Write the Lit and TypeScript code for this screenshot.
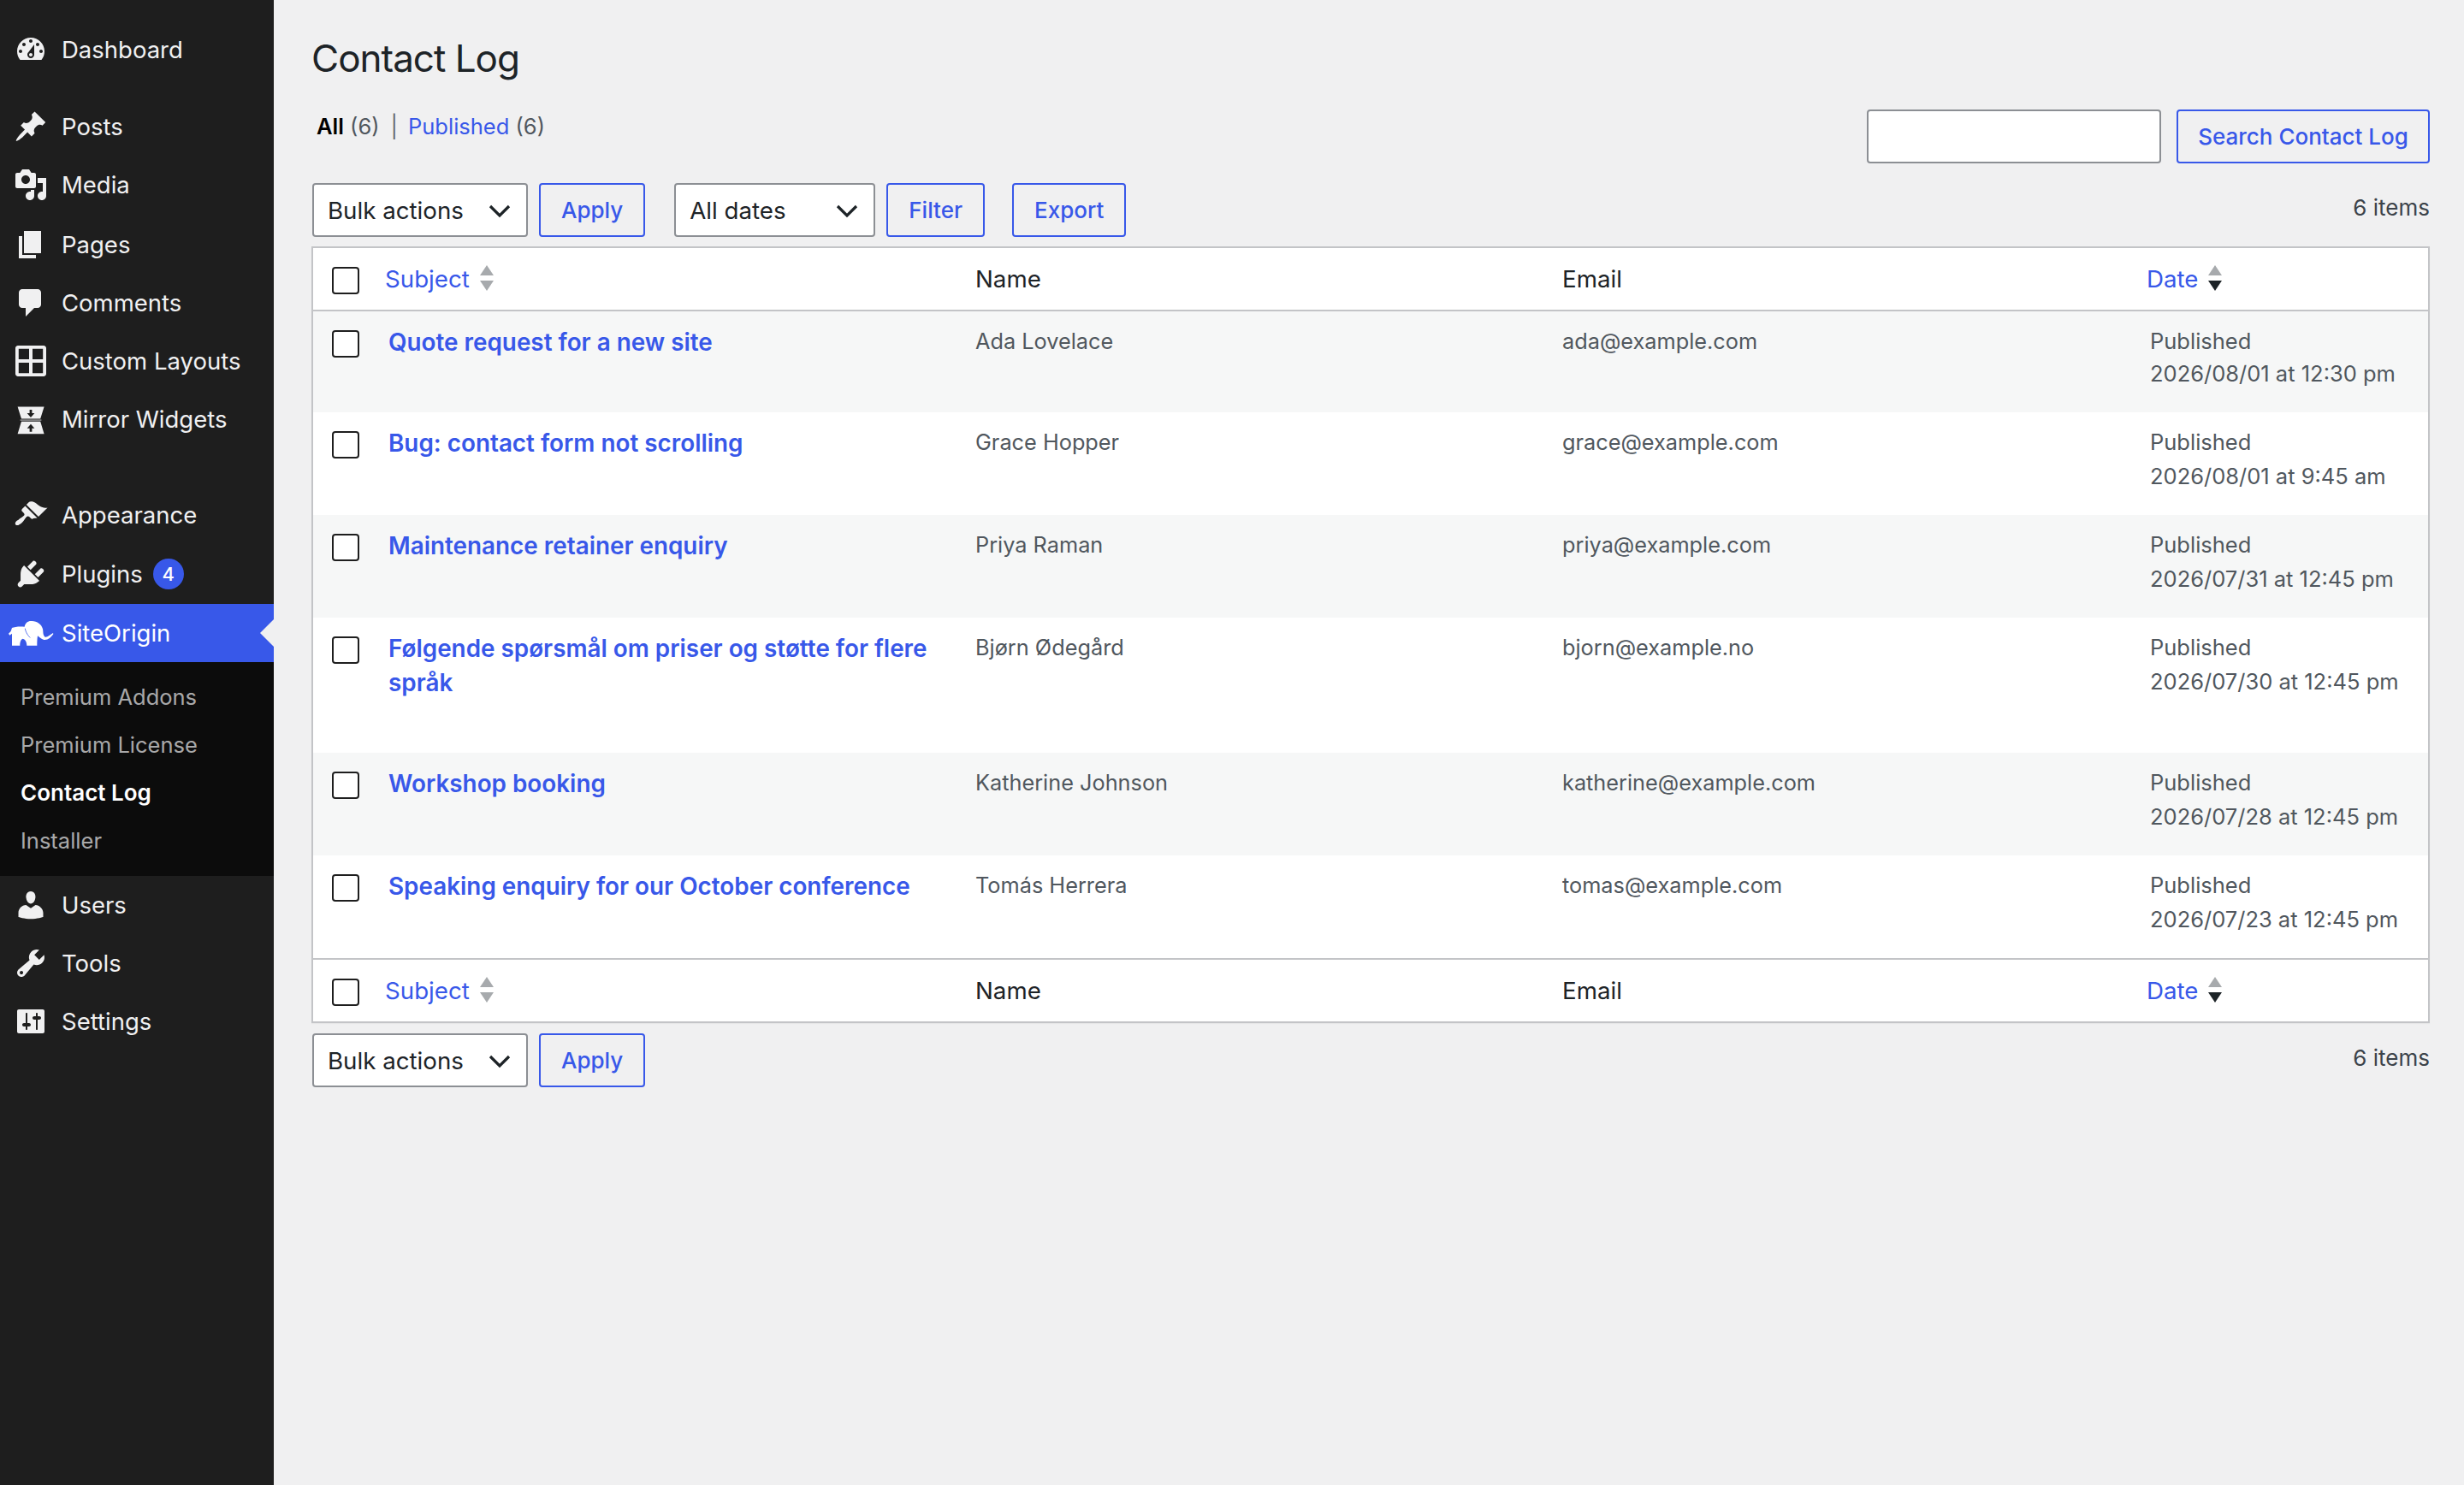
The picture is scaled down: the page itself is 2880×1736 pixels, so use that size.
import { LitElement, html, css, svg } from "lit";
import { customElement } from "lit/decorators.js";

// dashicons, 20x20 box
const icons: Record<string, unknown> = {
  dashboard: svg`<path fill-rule="evenodd" d="M3.76 16h12.48c1.1-1.37 1.76-3.11 1.76-5 0-4.42-3.58-8-8-8s-8 3.58-8 8c0 1.89.66 3.63 1.76 5zM10 4c.55 0 1 .45 1 1s-.45 1-1 1-1-.45-1-1 .45-1 1-1zM6 6c.55 0 1 .45 1 1s-.45 1-1 1-1-.45-1-1 .45-1 1-1zm8 0c.55 0 1 .45 1 1s-.45 1-1 1-1-.45-1-1 .45-1 1-1zm-5.37 5.55L12 7v6c0 1.1-.9 2-2 2s-2-.9-2-2c0-.57.24-1.08.63-1.45zM4 10c.55 0 1 .45 1 1s-.45 1-1 1-1-.45-1-1 .45-1 1-1zm12 0c.55 0 1 .45 1 1s-.45 1-1 1-1-.45-1-1 .45-1 1-1zm-5 3c0-.55-.45-1-1-1s-1 .45-1 1 .45 1 1 1 1-.45 1-1z"/>`,
  post: svg`<path d="M10.44 3.02l1.82-1.82 6.36 6.35-1.83 1.82c-1.05-.68-2.48-.57-3.41.36l-.75.75c-.92.93-1.04 2.35-.35 3.41l-1.83 1.82-2.41-2.41-2.8 2.79c-.42.42-3.38 2.71-3.8 2.29s1.86-3.39 2.28-3.81l2.79-2.79L4.1 9.36l1.83-1.82c1.05.69 2.48.57 3.4-.36l.75-.75c.93-.92 1.05-2.35.36-3.41z"/>`,
  media: svg`<path fill-rule="evenodd" d="M13 11V4c0-.55-.45-1-1-1h-1.67L9 1H5L3.67 3H2c-.55 0-1 .45-1 1v7c0 .55.45 1 1 1h10c.55 0 1-.45 1-1zM7 4.5c1.38 0 2.5 1.12 2.5 2.5S8.38 9.5 7 9.5 4.5 8.38 4.5 7 5.62 4.5 7 4.5zM14 6h5v10.5c0 1.38-1.12 2.5-2.5 2.5S14 17.88 14 16.5s1.12-2.5 2.5-2.5c.17 0 .34.02.5.05V9h-3V6zm-4 8.05V13h2v3.5c0 1.38-1.12 2.5-2.5 2.5S7 17.88 7 16.5 8.12 14 9.5 14c.17 0 .34.02.5.05z"/>`,
  page: svg`<path d="M6 15V2h10v13H6zm-1 1h8v2H3V5h2v11z"/>`,
  comments: svg`<path d="M5 2h9c1.1 0 2 .9 2 2v7c0 1.1-.9 2-2 2h-2l-5 5v-5H5c-1.1 0-2-.9-2-2V4c0-1.1.9-2 2-2z"/>`,
  layouts: svg`<path fill-rule="evenodd" d="M2.500 1h15c.83 0 1.500.67 1.500 1.500v15c0 .83-.67 1.500-1.500 1.500h-15c-.83 0-1.500-.67-1.500-1.500v-15C1 1.670 1.670 1 2.500 1zM2.900 2.900V9H9V2.900H2.900zm8.100 0V9h6.100V2.900H11zM2.900 11v6.100H9V11H2.900zm8.100 0v6.100h6.100V11H11z"/>`,
  mirror: svg`<path fill-rule="evenodd" d="M2.300 2.700h15.500l-2.200 7.100H4.500L2.300 2.700zM10 9l2.200-2.500h-1.500V4.500H9.300v2H7.800L10 9z"/>
    <path d="M3.800 10.200h12.400v.7H3.800z" opacity=".6"/>
    <path fill-rule="evenodd" d="M4.500 11.400h11.100l2.200 7.200H2.300l2.200-7.200zM10 12.900l-2.200 2.500h1.500v2h1.400v-2h1.500L10 12.900z"/>`,
  appearance: svg`<path d="M14.48 11.06L7.41 3.99l1.5-1.5c.5-.56 2.3-.47 3.51.32 1.21.8 1.43 1.28 2.91 2.1 1.18.64 2.45 1.26 4.45.85zm-.71.71L6.7 4.7 4.93 6.47c-.39.39-.39 1.02 0 1.41l1.06 1.06c.39.39.39 1.03 0 1.42-.6.6-1.43 1.11-2.21 1.69-.35.26-.7.53-1.01.84C1.43 13.23.4 14.98 1.2 15.78c.8.8 2.55-.23 3.89-1.57.31-.31.58-.66.84-1.01.58-.78 1.09-1.61 1.69-2.21.39-.39 1.03-.39 1.42 0l1.06 1.06c.39.39 1.02.39 1.41 0z"/>`,
  plugins: svg`<path d="M13.11 4.36L9.87 7.6 8 5.73l3.24-3.24c.35-.34 1.05-.2 1.56.32.52.51.66 1.21.31 1.55zm-8 1.77l.91-1.12 9.01 9.01-1.19.84c-.71.71-2.63 1.16-3.82 1.16H6.14L4.9 17.26c-.59.59-1.54.59-2.12 0-.59-.58-.59-1.53 0-2.12l1.24-1.24v-3.88c0-1.13.4-3.19 1.09-3.89zm7.26 3.97l3.24-3.24c.34-.35 1.04-.21 1.55.31.52.51.66 1.21.31 1.55l-3.24 3.25z"/>`,
  users: svg`<path d="M10 9.25c-2.27 0-2.73-3.44-2.73-3.44C7 4.02 7.82 2 9.97 2c2.16 0 2.98 2.02 2.71 3.81 0 0-.41 3.44-2.68 3.44zm0 2.57L12.72 10c2.39 0 4.52 2.33 4.52 4.53v2.49s-3.65 1.13-7.24 1.13c-3.65 0-7.24-1.13-7.24-1.13v-2.49c0-2.25 1.94-4.48 4.47-4.48z"/>`,
  tools: svg`<path fill-rule="evenodd" d="M16.68 9.77c-1.34 1.34-3.3 1.67-4.95.99l-5.41 6.52c-.99.99-2.59.99-3.58 0s-.99-2.59 0-3.57l6.52-5.42c-.68-1.65-.35-3.61.99-4.95 1.28-1.28 3.12-1.62 4.72-1.06l-2.89 2.89 2.82 2.82 2.86-2.87c.53 1.58.18 3.39-1.08 4.65zM3.81 16.21c.4.39 1.04.39 1.43 0 .4-.4.4-1.04 0-1.43-.39-.4-1.03-.4-1.43 0-.39.39-.39 1.03 0 1.43z"/>`,
  settings: svg`<path fill-rule="evenodd" d="M18 16V4c0-.55-.45-1-1-1H3c-.55 0-1 .45-1 1v12c0 .55.45 1 1 1h14c.55 0 1-.45 1-1zM8 11h1c.55 0 1 .45 1 1s-.45 1-1 1H8v1.5c0 .28-.22.5-.5.5s-.5-.22-.5-.5V13H6c-.55 0-1-.45-1-1s.45-1 1-1h1V5.500c0-.28.22-.5.5-.5s.5.22.5.5V11zm5-2h-1c-.55 0-1-.45-1-1s.45-1 1-1h1V5.500c0-.28.22-.5.5-.5s.5.22.5.5V7h1c.55 0 1 .45 1 1s-.45 1-1 1h-1v5.500c0 .28-.22.5-.5.5s-.5-.22-.5-.5V9z"/>`,
};

const topMenu = [
  { name: "Posts", icon: "post" },
  { name: "Media", icon: "media" },
  { name: "Pages", icon: "page", cls: "nudge" },
  { name: "Comments", icon: "comments" },
  { name: "Custom Layouts", icon: "layouts" },
  { name: "Mirror Widgets", icon: "mirror" },
];
const subMenu = ["Premium Addons", "Premium License", "Contact Log", "Installer"];
const bottomMenu = [
  { name: "Users", icon: "users" },
  { name: "Tools", icon: "tools" },
  { name: "Settings", icon: "settings" },
];

const rows = [
  ["Quote request for a new site", "Ada Lovelace", "ada@example.com", "2026/08/01 at 12:30 pm"],
  ["Bug: contact form not scrolling", "Grace Hopper", "grace@example.com", "2026/08/01 at 9:45 am"],
  ["Maintenance retainer enquiry", "Priya Raman", "priya@example.com", "2026/07/31 at 12:45 pm"],
  ["Følgende spørsmål om priser og støtte for flere språk", "Bjørn Ødegård", "bjorn@example.no", "2026/07/30 at 12:45 pm"],
  ["Workshop booking", "Katherine Johnson", "katherine@example.com", "2026/07/28 at 12:45 pm"],
  ["Speaking enquiry for our October conference", "Tomás Herrera", "tomas@example.com", "2026/07/23 at 12:45 pm"],
];

@customElement("app-root")
export class AppRoot extends LitElement {
  static styles = css`
    :host {
      display: flex;
      min-height: 1736px;
      background: #f0f0f1;
      font-family: Inter, "Liberation Sans", sans-serif;
      font-size: 25.5px;
      color: #50575e;
    }
    .sidebar {
      width: 320px;
      flex: none;
      background: #1e1e1e;
      padding-top: 24px;
      box-sizing: border-box;
    }
    .item {
      display: flex;
      align-items: center;
      height: 68px;
      color: #f0f0f1;
      font-size: 27.5px;
      position: relative;
    }
    .item svg {
      width: 40px;
      height: 40px;
      margin-left: 16px;
      margin-right: 16px;
      fill: #f0f0f1;
      flex: none;
    }
    .nudge {
      margin-top: 2px;
    }
    .gap-s {
      height: 22px;
    }
    .gap-l {
      height: 44px;
    }
    .plugins {
      height: 70px;
    }
    .badge {
      width: 36px;
      height: 36px;
      border-radius: 50%;
      background: #3858e9;
      color: #fff;
      font-size: 22px;
      font-weight: 500;
      display: flex;
      align-items: center;
      justify-content: center;
      margin-left: 12px;
    }
    .active {
      background: #3858e9;
      color: #fff;
    }
    .active svg {
      width: 54px;
      height: 32px;
      margin-left: 9px;
      margin-right: 9px;
      fill: #fff;
    }
    .active::after {
      content: "";
      position: absolute;
      right: 0;
      top: 18px;
      border: 16px solid transparent;
      border-right-color: #f0f0f1;
    }
    .sub {
      background: #0c0c0c;
      padding: 13px 0;
    }
    .sub div {
      height: 56px;
      line-height: 56px;
      padding-left: 24px;
      color: rgba(240, 240, 241, 0.7);
      font-size: 25.5px;
    }
    .sub .current {
      color: #fff;
      font-size: 26px;
      font-weight: 600;
    }
    .main {
      flex: 1;
      padding: 0 40px 0 44px;
      min-width: 0;
    }
    h1 {
      margin: 0;
      padding-top: 38px;
      font-size: 44px;
      line-height: 60px;
      font-weight: 400;
      letter-spacing: -1px;
      color: #1d2327;
    }
    .top {
      display: flex;
      justify-content: space-between;
      align-items: flex-start;
      margin-top: 30px;
    }
    .views {
      margin-left: 6px;
      line-height: 40px;
      display: flex;
      gap: 7px;
    }
    .views b {
      color: #000;
      font-weight: 600;
    }
    .views i {
      font-style: normal;
      color: #646970;
      margin: 0 5px 0 6px;
    }
    a {
      color: #3858e9;
      text-decoration: none;
    }
    .search {
      display: flex;
      gap: 18px;
    }
    .search .input {
      width: 344px;
      height: 63px;
      box-sizing: border-box;
      background: #fff;
      border: 2px solid #8c8f94;
      border-radius: 4px;
    }
    .search .btn {
      width: 296px;
      padding: 0;
    }
    .btn {
      height: 63px;
      box-sizing: border-box;
      padding: 0 24px;
      border: 2px solid #3858e9;
      border-radius: 4px;
      color: #3858e9;
      font-size: 26px;
      font-weight: 500;
      background: #f0f0f1;
      display: flex;
      align-items: center;
      justify-content: center;
    }
    .tablenav {
      display: flex;
      align-items: center;
      height: 63px;
      gap: 13px;
      margin-left: 1px;
    }
    .tablenav.upper {
      margin-top: 23px;
    }
    .tablenav.lower {
      margin-top: 12px;
    }
    .select {
      height: 63px;
      box-sizing: border-box;
      background: #fff;
      border: 2px solid #8c8f94;
      border-radius: 4px;
      color: #1d2327;
      font-size: 27.7px;
      padding-left: 16px;
      display: flex;
      align-items: center;
      justify-content: space-between;
    }
    .select svg {
      width: 40px;
      height: 40px;
      margin-right: 11px;
      fill: none;
      stroke: #1d2327;
      stroke-width: 1.6;
    }
    .bulk {
      width: 252px;
    }
    .dates {
      width: 235px;
      margin-left: 21px;
    }
    .export {
      margin-left: 19px;
    }
    .count {
      margin-left: auto;
      align-self: flex-start;
      margin-top: 13px;
      line-height: 32px;
      font-size: 26px;
      color: #3c434a;
    }
    table {
      width: 100%;
      table-layout: fixed;
      border-collapse: separate;
      border-spacing: 0;
      background: #fff;
      border: 2px solid #c3c4c7;
      margin-top: 11px;
      box-shadow: 0 1px 1px rgba(0, 0, 0, 0.04);
    }
    th {
      height: 74px;
      padding: 0 20px;
      box-sizing: border-box;
      text-align: left;
      font-weight: 400;
      font-size: 27.7px;
      color: #1d2327;
      border-bottom: 2px solid #c3c4c7;
    }
    tfoot th {
      border-bottom: none;
      border-top: 2px solid #c3c4c7;
    }
    th a {
      display: inline-flex;
      align-items: center;
      gap: 12px;
      margin-left: -3px;
    }
    th:last-child a {
      margin-left: -4px;
    }
    .sort {
      width: 16px;
      height: 30px;
      margin-top: -2px;
    }
    td {
      padding: 15px 20px 25px;
      vertical-align: top;
      line-height: 40px;
      font-size: 25.3px;
    }
    td.date {
      font-size: 25.5px;
    }
    tbody tr:nth-child(odd) td {
      background: #f6f7f7;
    }
    tbody tr:first-child td.date {
      padding-top: 16px;
      padding-bottom: 23px;
      line-height: 38px;
    }
    td.subject {
      padding: 16px 20px 62px 21px;
      font-size: 27.85px;
      font-weight: 600;
    }
    td.subject a {
      display: block;
      line-height: 40px;
    }
    th.check {
      padding: 4px 0 0 22px;
    }
    tbody td.check {
      padding: 22px 0 0 22px;
    }
    .box {
      display: block;
      width: 32px;
      height: 32px;
      box-sizing: border-box;
      border: 2px solid #1e1e1e;
      border-radius: 4px;
      background: #fff;
    }
    .ear {
      fill: none;
      stroke: #3858e9;
      stroke-width: 2.5;
    }
  `;

  sortIcon(dark: boolean) {
    return html`<svg class="sort" viewBox="0 0 16 30">
      <path d="M8 0l8 12H0z" fill="#a7aaad" />
      <path d="M8 30l8-12H0z" fill=${dark ? "#1d2327" : "#a7aaad"} />
    </svg>`;
  }

  menuItem(m: { name: string; icon: string; cls?: string }) {
    return html`<div class="item ${m.cls ?? ""}">
      <svg viewBox="0 0 20 20">${icons[m.icon]}</svg>${m.name}
    </div>`;
  }

  tableHead() {
    return html`<tr>
      <th class="check"><span class="box"></span></th>
      <th><a href="#">Subject ${this.sortIcon(false)}</a></th>
      <th>Name</th>
      <th>Email</th>
      <th><a href="#">Date ${this.sortIcon(true)}</a></th>
    </tr>`;
  }

  chevron() {
    return html`<svg viewBox="0 0 20 20"><path d="M4.500 7.500l5.500 5.500 5.500-5.500" /></svg>`;
  }

  render() {
    return html`
      <nav class="sidebar">
        ${this.menuItem({ name: "Dashboard", icon: "dashboard" })}
        <div class="gap-s"></div>
        ${topMenu.map((m) => this.menuItem(m))}
        <div class="gap-l"></div>
        ${this.menuItem({ name: "Appearance", icon: "appearance" })}
        <div class="item plugins">
          <svg viewBox="0 0 20 20">${icons.plugins}</svg>Plugins
          <span class="badge">4</span>
        </div>
        <div class="item active">
          <svg viewBox="27 66 162 96">
            <path
              d="M30 116 38 108 42 96C50 92 70 90 86 92 88 78 100 70 112 72 130 72 146 84 150 100 152 112 150 122 158 128 166 130 176 120 186 114L187 118C178 130 168 140 154 138 144 136 138 128 132 124 130 136 130 148 130 158L94 158C94 148 90 136 80 134 72 136 70 148 70 158L42 158C42 148 42 130 42 116L34 122Z"
            />
            <path class="ear" d="M88 98C90 112 100 126 106 130" />
          </svg>SiteOrigin
        </div>
        <div class="sub">
          ${subMenu.map(
            (s) => html`<div class=${s === "Contact Log" ? "current" : ""}>${s}</div>`
          )}
        </div>
        ${bottomMenu.map((m) => this.menuItem(m))}
      </nav>
      <main class="main">
        <h1>Contact Log</h1>
        <div class="top">
          <div class="views">
            <span><b>All</b> (6)</span><i>|</i>
            <span><a href="#">Published</a> (6)</span>
          </div>
          <div class="search">
            <div class="input"></div>
            <div class="btn">Search Contact Log</div>
          </div>
        </div>
        <div class="tablenav upper">
          <div class="select bulk">Bulk actions ${this.chevron()}</div>
          <div class="btn">Apply</div>
          <div class="select dates">All dates ${this.chevron()}</div>
          <div class="btn">Filter</div>
          <div class="btn export">Export</div>
          <div class="count">6 items</div>
        </div>
        <table>
          <colgroup>
            <col style="width:67px" />
            <col style="width:687px" />
            <col style="width:686px" />
            <col style="width:687px" />
            <col />
          </colgroup>
          <thead>${this.tableHead()}</thead>
          <tbody>
            ${rows.map(
              (r) => html`<tr>
                <td class="check"><span class="box"></span></td>
                <td class="subject"><a href="#">${r[0]}</a></td>
                <td>${r[1]}</td>
                <td>${r[2]}</td>
                <td class="date">Published<br />${r[3]}</td>
              </tr>`
            )}
          </tbody>
          <tfoot>${this.tableHead()}</tfoot>
        </table>
        <div class="tablenav lower">
          <div class="select bulk">Bulk actions ${this.chevron()}</div>
          <div class="btn">Apply</div>
          <div class="count">6 items</div>
        </div>
      </main>
    `;
  }
}
